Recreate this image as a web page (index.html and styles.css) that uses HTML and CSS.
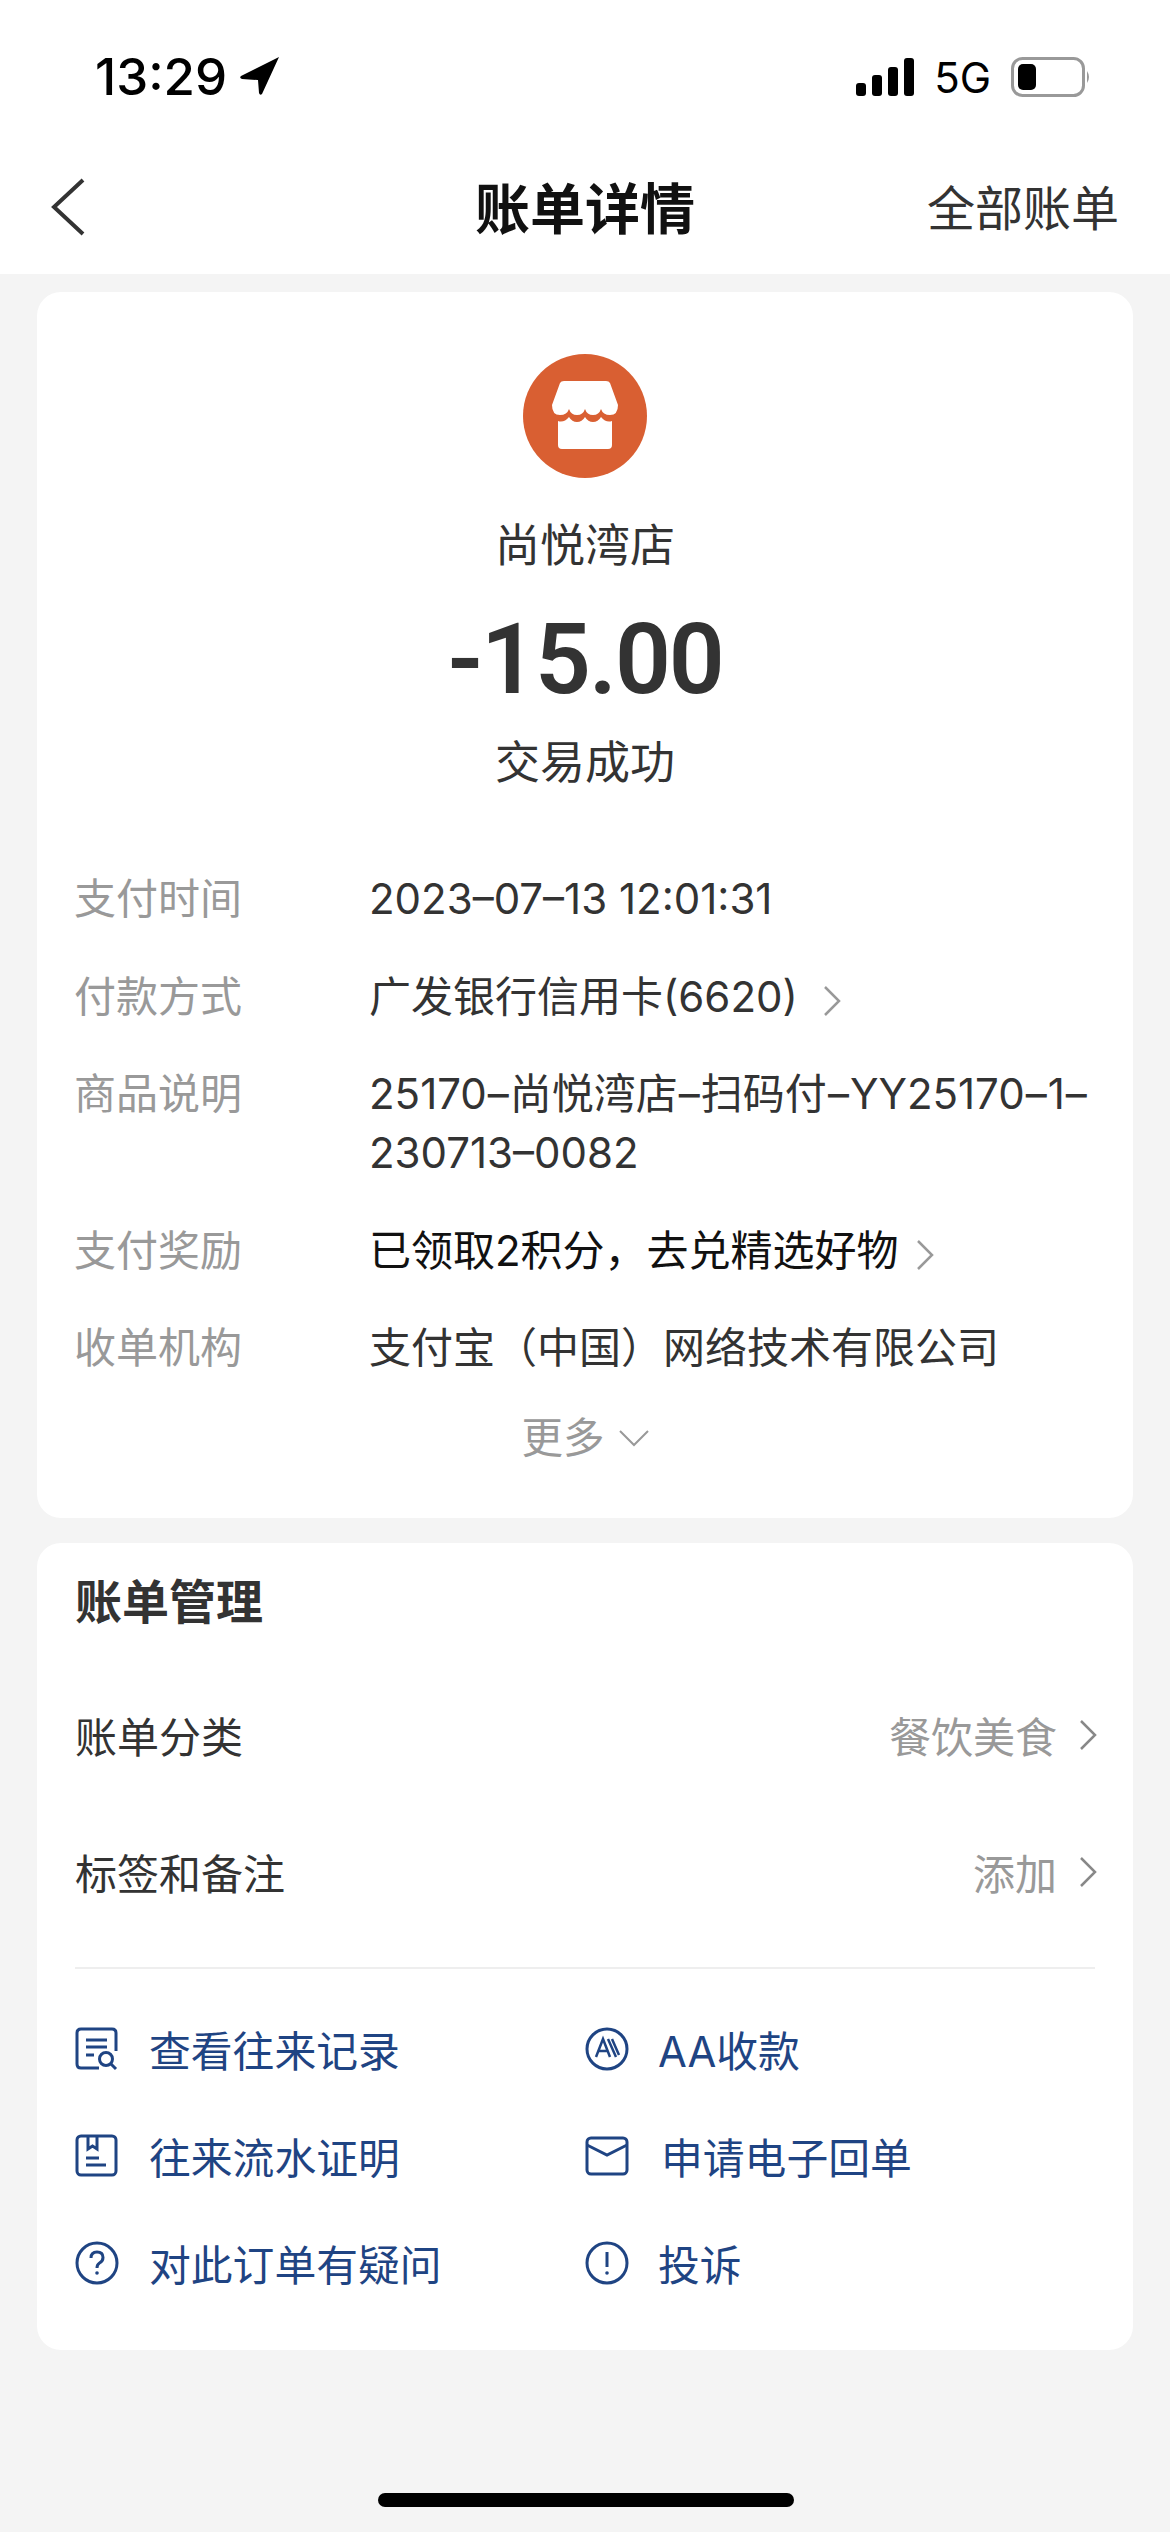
FILE: index.html
```html
<!DOCTYPE html>
<html lang="zh-CN">
<head>
  <meta charset="UTF-8" />
  <meta name="viewport" content="width=device-width, initial-scale=1.0"/>
  <title>账单详情</title>
  <link rel="stylesheet" href="styles.css">
</head>
<body>

<div class="top">
  <div class="statusbar">
    <div class="status-left">
      <span class="clock">13:29</span>
      <svg class="loc" width="42" height="42" viewBox="0 0 42 42"><path d="M40 2 L2 21 Q0 23 3 24 L19 25 L20 38 Q21 41 23 39 Z" fill="#000"/></svg>
    </div>
    <div class="status-right">
      <svg width="58" height="38" viewBox="0 0 58 38"><g fill="#000"><rect x="0" y="25" width="10" height="13" rx="3"/><rect x="16" y="17" width="10" height="21" rx="3"/><rect x="32" y="9" width="10" height="29" rx="3"/><rect x="48" y="0" width="10" height="38" rx="3"/></g></svg>
      <span class="net">5G</span>
      <svg width="80" height="40" viewBox="0 0 80 40"><rect x="1.5" y="1.5" width="71" height="37" rx="10" fill="none" stroke="#999" stroke-width="3"/><rect x="7" y="7" width="18" height="26" rx="5" fill="#000"/><path d="M76 14 Q80 20 76 26 Z" fill="#999"/></svg>
    </div>
  </div>
  <div class="navbar">
    <svg class="back" width="36" height="58" viewBox="0 0 36 58"><path d="M33 2 L4 29 L33 56" fill="none" stroke="#333" stroke-width="4"/></svg>
    <div class="nav-title">账单详情</div>
    <div class="nav-link">全部账单</div>
  </div>
</div>

<div class="card summary">
  <div class="shop-icon">
    <svg width="66" height="70" viewBox="0 0 66 70">
      <path d="M8 2 Q9 0 12 0 H54 Q57 0 58 2 L66 24 Q66 34 58 34 Q51 34 49 28 Q47 34 41 34 Q35 34 33 28 Q31 34 25 34 Q19 34 17 28 Q15 34 8 34 Q0 34 0 24 Z" fill="#fff"/>
      <path d="M6 40 Q12 42 17 36 Q20 41 25 41 Q30 41 33 36 Q36 41 41 41 Q46 41 49 36 Q54 42 60 40 V64 Q60 68 56 68 H10 Q6 68 6 64 Z" fill="#fff"/>
    </svg>
  </div>
  <div class="shop-name">尚悦湾店</div>
  <div class="amount">-15.00</div>
  <div class="state">交易成功</div>

  <div class="details">
    <div class="row"><span class="label">支付时间</span><span class="value">2023–07–13 12:01:31</span></div>
    <div class="row"><span class="label">付款方式</span><span class="value">广发银行信用卡(6620)<svg class="chev" width="18" height="30" viewBox="0 0 18 30"><path d="M2 1 L16 15 L2 29" fill="none" stroke="#999" stroke-width="2.5"/></svg></span></div>
    <div class="row"><span class="label">商品说明</span><span class="value">25170<span class="dash">–</span>尚悦湾店<span class="dash">–</span>扫码付<span class="dash">–</span>YY25170<span class="dash">–</span>1<span class="dash">–</span><br>230713–0082</span></div>
    <div class="row"><span class="label">支付奖励</span><span class="value dark">已领取2积分，去兑精选好物<svg class="chev near" width="18" height="30" viewBox="0 0 18 30"><path d="M2 1 L16 15 L2 29" fill="none" stroke="#999" stroke-width="2.5"/></svg></span></div>
    <div class="row"><span class="label">收单机构</span><span class="value">支付宝（中国）网络技术有限公司</span></div>
  </div>
  <div class="more">更多<svg width="30" height="18" viewBox="0 0 30 18"><path d="M1 2 L15 16 L29 2" fill="none" stroke="#999" stroke-width="2"/></svg></div>
</div>

<div class="card manage">
  <h3>账单管理</h3>
  <div class="manage-row"><span>账单分类</span><span class="manage-val">餐饮美食<svg width="18" height="30" viewBox="0 0 18 30"><path d="M2 1 L16 15 L2 29" fill="none" stroke="#888" stroke-width="2.5"/></svg></span></div>
  <div class="manage-row"><span>标签和备注</span><span class="manage-val">添加<svg width="18" height="30" viewBox="0 0 18 30"><path d="M2 1 L16 15 L2 29" fill="none" stroke="#888" stroke-width="2.5"/></svg></span></div>
  <div class="divider"></div>
  <div class="links">
    <div class="link">
      <svg width="44" height="44" viewBox="0 0 44 44" class="ico"><path d="M24 41 H6 Q2 41 2 37 V6 Q2 2 6 2 H37 Q41 2 41 6 V24" /><path d="M11 13 H32 M11 20 H32 M11 28 H19"/><circle cx="31" cy="32" r="6.5"/><path d="M36 37 L41 42"/></svg>
      <span>查看往来记录</span>
    </div>
    <div class="link">
      <svg width="44" height="44" viewBox="0 0 44 44" class="ico"><circle cx="22" cy="22" r="20"/><path class="thin" d="M11 30 L18 12 L25 30 M13.5 24 H22.5 M23 12 L31 30 M27 12 L34 28"/></svg>
      <span>AA收款</span>
    </div>
    <div class="link">
      <svg width="44" height="44" viewBox="0 0 44 44" class="ico"><rect x="2" y="2" width="39" height="39" rx="4"/><path d="M13 2 V15 L17.5 12 L22 15 V2 M11 24 H24 M11 31 H31"/></svg>
      <span>往来流水证明</span>
    </div>
    <div class="link mail">
      <svg width="44" height="44" viewBox="0 0 44 44" class="ico"><rect x="2" y="4" width="40" height="36" rx="4"/><path d="M2 11 L22 21 L42 11"/></svg>
      <span>申请电子回单</span>
    </div>
    <div class="link">
      <svg width="44" height="44" viewBox="0 0 44 44" class="ico"><circle cx="22" cy="22" r="20"/><path d="M16 17 Q16 11 22 11 Q28 11 28 16.5 Q28 20 24.5 22 Q22 23.5 22 27"/><circle class="dot" cx="22" cy="32" r="1.8"/></svg>
      <span>对此订单有疑问</span>
    </div>
    <div class="link">
      <svg width="44" height="44" viewBox="0 0 44 44" class="ico"><circle cx="22" cy="22" r="20"/><path d="M22 11 V26"/><circle class="dot" cx="22" cy="32" r="1.8"/></svg>
      <span>投诉</span>
    </div>
  </div>
</div>

<div class="home-bar"></div>

</body>
</html>
```

FILE: styles.css
```css
html, body {
  margin: 0;
  height: 2532px;
  overflow: hidden;
}

body {
  position: relative;
  font-family: "Inter", "Noto Sans CJK SC", sans-serif;
  background-color: #f4f4f4;
  color: #333;
}

.top {
  height: 274px;
  background: #fff;
}

.statusbar {
  height: 150px;
  display: flex;
  justify-content: space-between;
  align-items: center;
  padding: 0 79px 0 95px;
  box-sizing: border-box;
}

.status-left {
  display: flex;
  align-items: center;
  gap: 12px;
  padding-top: 2px;
}

.clock {
  font-size: 51px;
  font-weight: 500;
  color: #000;
}

.status-right {
  display: flex;
  align-items: center;
  gap: 20px;
  padding-top: 4px;
}

.net {
  font-size: 42px;
  color: #000;
}

.navbar {
  height: 124px;
  display: flex;
  align-items: center;
  justify-content: space-between;
  padding: 0 51px 15px 50px;
  position: relative;
  box-sizing: border-box;
}

.back {
  margin-top: 5px;
}

.nav-title {
  position: absolute;
  left: 0;
  right: 0;
  text-align: center;
  font-size: 55px;
  font-weight: 700;
  color: #111;
}

.nav-link {
  font-size: 48px;
  color: #333;
  position: relative;
}

.card {
  background: #fff;
  border-radius: 24px;
  margin: 0 37px;
}

.summary {
  margin-top: 18px;
  height: 1226px;
  box-sizing: border-box;
  padding-top: 62px;
}

.shop-icon {
  width: 124px;
  height: 124px;
  border-radius: 50%;
  background: #d95f32;
  margin: 0 auto;
  display: flex;
  align-items: center;
  justify-content: center;
}

.shop-name {
  text-align: center;
  font-size: 45px;
  line-height: 60px;
  margin-top: 38px;
  color: #333;
}

.amount {
  text-align: center;
  font-family: "Roboto", sans-serif;
  font-size: 98px;
  font-weight: 600;
  letter-spacing: -2px;
  line-height: 110px;
  margin-top: 29px;
  color: #333;
}

.state {
  text-align: center;
  font-size: 45px;
  line-height: 60px;
  margin-top: 18px;
  color: #333;
}

.details {
  margin-top: 76px;
  padding: 0 37px;
}

.row {
  display: flex;
  font-size: 42px;
  line-height: 59px;
  margin-bottom: 38.5px;
}

.label {
  width: 295px;
  flex-shrink: 0;
  color: #999;
}

.value {
  color: #333;
  white-space: nowrap;
}

.value.dark {
  color: #111;
}

.dash {
  margin: 0 1px;
}

.chev {
  margin-left: 25px;
  vertical-align: -4px;
}

.chev.near {
  margin-left: 17px;
}

.more {
  display: flex;
  align-items: center;
  justify-content: center;
  gap: 14px;
  font-size: 41.5px;
  line-height: 59px;
  margin-top: -7px;
  color: #999;
}

.manage {
  margin-top: 25px;
  height: 807px;
  padding: 0 38px;
  box-sizing: border-box;
}

.manage h3 {
  margin: 0;
  padding-top: 26px;
  font-size: 47px;
  line-height: 66px;
  font-weight: 700;
  color: #333;
}

.manage-row {
  display: flex;
  justify-content: space-between;
  align-items: center;
  height: 137px;
  font-size: 42px;
  color: #333;
}

.manage-row:first-of-type {
  margin-top: 31px;
}

.manage-val {
  display: flex;
  align-items: center;
  gap: 22px;
  margin-right: -2px;
  color: #999;
}

.divider {
  height: 2px;
  background: #eeeeee;
  margin-top: 27px;
}

.links {
  display: grid;
  grid-template-columns: 510px 1fr;
  grid-auto-rows: 107px;
  margin-top: 26px;
}

.link {
  display: flex;
  align-items: center;
  gap: 30px;
  font-size: 41.8px;
  color: #1f4483;
}

.link:nth-child(even) {
  gap: 29px;
}

.link.mail {
  gap: 32px;
}

.ico {
  fill: none;
  stroke: #1f4483;
  stroke-width: 3;
  flex-shrink: 0;
}

.ico .thin {
  stroke-width: 2.5;
}

.ico .dot {
  fill: #1f4483;
  stroke: none;
}

.home-bar {
  position: absolute;
  left: 378px;
  top: 2493px;
  width: 416px;
  height: 14px;
  border-radius: 7px;
  background: #000;
}
```
